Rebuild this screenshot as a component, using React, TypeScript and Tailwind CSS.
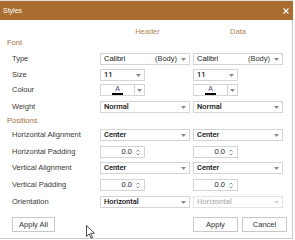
import React from 'react';

const font = "font-['Liberation_Sans',Arial,sans-serif]";

const Arrow: React.FC<{ disabled?: boolean }> = ({ disabled }) => (
  <svg width="5" height="3" viewBox="0 0 5 3" className="shrink-0">
    <path d="M0 0h5L2.5 3z" fill={disabled ? '#d6d6d6' : '#8a8a8a'} />
  </svg>
);

const Select: React.FC<{ value: string; extra?: string; width?: string; disabled?: boolean }> = ({
  value,
  extra,
  width = 'w-[90px]',
  disabled,
}) => (
  <div
    className={`${width} h-full flex items-center border ${
      disabled ? 'border-[#e4e4e4] text-[#b4b4b4]' : 'border-[#d4d4d4] text-[#111]'
    } bg-white pl-[3px] pr-[3px]`}
  >
    <span className={`flex-1 truncate ${extra ? '' : "font-['Roboto',Arial,sans-serif] font-medium"}`}>{value}</span>
    {extra && <span className="mr-[4px] text-[#333]">{extra}</span>}
    <Arrow disabled={disabled} />
  </div>
);

const Spinner: React.FC = () => (
  <div className="w-[45px] h-full flex items-center justify-end border border-[#d4d4d4] bg-white pr-[4px] gap-[4px] text-[#1a1a1a]">
    <span>0.0</span>
    <svg width="4" height="7" viewBox="0 0 4 7">
      <path d="M0.5 2.5L2 1l1.5 1.5M0.5 4.5L2 6l1.5-1.5" stroke="#777" strokeWidth="0.8" fill="none" />
    </svg>
  </div>
);

const ColourPicker: React.FC = () => (
  <div className="w-[45px] h-full flex border border-[#d4d4d4] bg-white">
    <div className="w-[34px] flex flex-col items-center justify-center border-r border-[#d4d4d4]">
      <span className="text-[7px] leading-[7px] text-[#3c4c8c]">A</span>
      <span className="w-[11px] h-[2px] bg-black mt-[1px]" />
    </div>
    <div className="flex-1 flex items-center justify-center">
      <Arrow />
    </div>
  </div>
);

const Row: React.FC<{ label: string; mt: string; children: React.ReactNode }> = ({ label, mt, children }) => (
  <div className={`flex items-center h-[12px] ${mt}`}>
    <div className="w-[100px] pl-[12px] text-[#3a3a3a]">{label}</div>
    {children}
  </div>
);

const Pair: React.FC<{ a: React.ReactNode; b: React.ReactNode }> = ({ a, b }) => (
  <div className="flex h-full">
    <div className="w-[93px] h-full">{a}</div>
    <div className="w-[90px] h-full">{b}</div>
  </div>
);

export default function App() {
  return (
    <div className={`w-[295px] h-[240px] bg-white relative overflow-hidden text-[7.5px] leading-none ${font}`}>
      <div className="w-[293px] h-[239px] border-t border-[#dcdcdc] flex flex-col">
        <div className="h-[19px] bg-[#a86d2f] flex items-center justify-between pl-[3px] pr-[4px] text-white">
          <span className="text-[7px]">Styles</span>
          <svg width="6" height="6" viewBox="0 0 6 6">
            <path d="M0.5 0.5l5 5M5.5 0.5l-5 5" stroke="#fff" strokeWidth="1.1" />
          </svg>
        </div>
        <div className="flex-1 flex flex-col border-r border-b border-[#cacaca]">
          <div className="flex h-[11px] mt-[6px] items-center text-[#ad8258]">
            <div className="w-[100px]" />
            <div className="w-[93px] text-center pl-[2px]">Header</div>
            <div className="w-[90px] text-center">Data</div>
          </div>
          <div className="h-[10px] mt-[1px] pl-[7px] flex items-center text-[#a5703c]">Font</div>
          <Row label="Type" mt="mt-[5px]">
            <Pair a={<Select value="Calibri" extra="(Body)" />} b={<Select value="Calibri" extra="(Body)" />} />
          </Row>
          <Row label="Size" mt="mt-[4px]">
            <Pair a={<Select value="11" width="w-[45px]" />} b={<Select value="11" width="w-[45px]" />} />
          </Row>
          <Row label="Colour" mt="mt-[3px]">
            <Pair a={<ColourPicker />} b={<ColourPicker />} />
          </Row>
          <Row label="Weight" mt="mt-[5px]">
            <Pair a={<Select value="Normal" />} b={<Select value="Normal" />} />
          </Row>
          <div className="h-[10px] mt-[3px] pl-[7px] flex items-center text-[#a5703c]">Positions</div>
          <Row label="Horizontal Alignment" mt="mt-[3px]">
            <Pair a={<Select value="Center" />} b={<Select value="Center" />} />
          </Row>
          <Row label="Horizontal Padding" mt="mt-[5px]">
            <Pair a={<Spinner />} b={<Spinner />} />
          </Row>
          <Row label="Vertical Alignment" mt="mt-[4px]">
            <Pair a={<Select value="Center" />} b={<Select value="Center" />} />
          </Row>
          <Row label="Vertical Padding" mt="mt-[5px]">
            <Pair a={<Spinner />} b={<Spinner />} />
          </Row>
          <Row label="Orientation" mt="mt-[5px]">
            <Pair a={<Select value="Horizontal" />} b={<Select value="Horizontal" disabled />} />
          </Row>
          <div className="flex h-[15px] mt-[9px] text-[#333]">
            <div className="ml-[12px] w-[43px] border border-[#c8c8c8] flex items-center justify-center">Apply All</div>
            <div className="ml-[138px] w-[45px] border border-[#c8c8c8] flex items-center justify-center">Apply</div>
            <div className="ml-[4px] w-[45px] border border-[#c8c8c8] flex items-center justify-center">Cancel</div>
          </div>
        </div>
      </div>
      <svg className="absolute left-[86px] top-[225px]" width="9" height="14" viewBox="0 0 9 14">
        <path d="M0.5 0.5v11l2.7-2.6 1.8 4.2 1.6-0.7-1.8-4.1h3.7z" fill="#fff" stroke="#222" strokeWidth="0.8" />
      </svg>
    </div>
  );
}
